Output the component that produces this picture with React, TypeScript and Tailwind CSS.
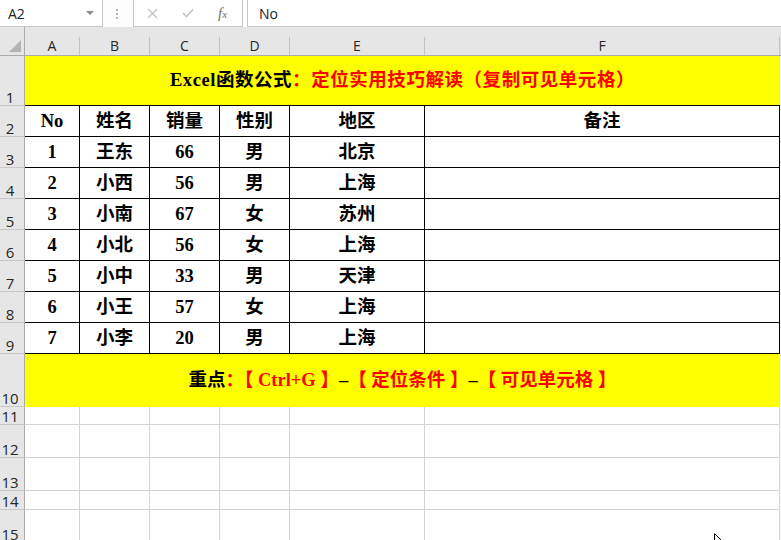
import React from 'react';

const cols = [
  { key: 'A', w: 'w-[55px]' },
  { key: 'B', w: 'w-[70px]' },
  { key: 'C', w: 'w-[70px]' },
  { key: 'D', w: 'w-[70px]' },
  { key: 'E', w: 'w-[135px]' },
  { key: 'F', w: 'w-[355px]' },
];

const header = ['No', '姓名', '销量', '性别', '地区', '备注'];

const rows = [
  ['1', '王东', '66', '男', '北京', ''],
  ['2', '小西', '56', '男', '上海', ''],
  ['3', '小南', '67', '女', '苏州', ''],
  ['4', '小北', '56', '女', '上海', ''],
  ['5', '小中', '33', '男', '天津', ''],
  ['6', '小王', '57', '女', '上海', ''],
  ['7', '小李', '20', '男', '上海', ''],
];

const emptyRows = [
  { n: 11, h: 'h-[18px]' },
  { n: 12, h: 'h-[33px]' },
  { n: 13, h: 'h-[33px]' },
  { n: 14, h: 'h-[19px]' },
  { n: 15, h: 'h-[33px]' },
];

const cellFont = "font-['Liberation_Serif','Noto_Sans_CJK_SC',serif] font-bold text-[18.5px] text-black";

function RowHead({ n }: { n: number }) {
  return (
    <div className="w-[25px] shrink-0 h-full flex items-end justify-center pr-[4px] bg-[#e6e6e6] border-r border-b border-r-[#ababab] border-b-[#c8c8c8] font-['Open_Sans',sans-serif] text-[15px] leading-none text-[#262626]">
      {n}
    </div>
  );
}

function FormulaBar() {
  return (
    <div className="flex h-[27px] shrink-0 bg-[#fdfdfd] font-['Open_Sans',sans-serif] text-[14px] text-[#222]">
      <div className="w-[103px] h-full flex items-center justify-between pl-[8px] pr-[8px] bg-white border-r border-b border-[#c6c6c6]">
        <span>A2</span>
        <svg width="8" height="5" viewBox="0 0 8 5">
          <path d="M0 0 L8 0 L4 4 Z" fill="#8a8a8a" />
        </svg>
      </div>
      <div className="w-[30px] h-full flex flex-col items-center justify-center gap-[2px] pr-[2px]">
        <span className="w-[2px] h-[2px] bg-[#b5b5b5]" />
        <span className="w-[2px] h-[2px] bg-[#b5b5b5]" />
        <span className="w-[2px] h-[2px] bg-[#b5b5b5]" />
      </div>
      <div className="w-[110px] h-full flex items-center bg-white border-l border-r border-b border-[#c6c6c6]">
        <svg className="ml-[13px]" width="11" height="11" viewBox="0 0 11 11">
          <path d="M1 1 L10 10 M10 1 L1 10" stroke="#c3c3c3" strokeWidth="1.4" />
        </svg>
        <svg className="ml-[24px]" width="12" height="10" viewBox="0 0 12 10">
          <path d="M1 5 L4.5 8.5 L11 1.5" stroke="#c3c3c3" strokeWidth="1.6" fill="none" />
        </svg>
        <span className="ml-[24px] font-['Liberation_Serif',serif] italic text-[15px] text-[#6e6e6e] leading-none">
          f<span className="text-[11px]">x</span>
        </span>
      </div>
      <div className="w-[4px] h-full" />
      <div className="flex-1 h-full flex items-center pl-[11px] bg-white border-l border-b border-[#c6c6c6]">
        No
      </div>
    </div>
  );
}

function ColumnHeader() {
  return (
    <div className="flex h-[29px] shrink-0 bg-[#e6e6e6] border-b border-[#ababab] font-['Open_Sans',sans-serif] text-[14px] text-[#262626]">
      <div className="w-[25px] shrink-0 h-full flex items-end justify-end pr-[3px] pb-[3px] border-r border-[#ababab]">
        <svg width="12" height="12" viewBox="0 0 12 12">
          <path d="M12 0 L12 12 L0 12 Z" fill="#b4b4b4" />
        </svg>
      </div>
      {cols.map(c => (
        <div key={c.key} className={`${c.w} shrink-0 h-full flex items-end`}>
          <div className="flex-1 text-center leading-none pb-[2px]">{c.key}</div>
          <div className="w-px h-[18px] bg-[#c2c2c2]" />
        </div>
      ))}
    </div>
  );
}

export default function App() {
  return (
    <div className="relative w-[781px] h-[540px] overflow-hidden bg-white flex flex-col">
      <FormulaBar />
      <ColumnHeader />

      {/* row 1: merged title */}
      <div className="flex h-[50px] shrink-0">
        <RowHead n={1} />
        <div className={`w-[755px] h-full flex items-center justify-center bg-[#ffff00] border-b border-black tracking-[0.55px] [text-spacing-trim:space-all] ${cellFont}`}>
          <span>Excel函数公式</span>
          <span className="text-[#ff0000]">：定位实用技巧解读（复制可见单元格）</span>
        </div>
      </div>

      {/* row 2: header */}
      <div className="flex h-[31px] shrink-0">
        <RowHead n={2} />
        {cols.map((c, i) => (
          <div key={c.key} className={`${c.w} shrink-0 h-full flex items-center justify-center pt-[2px] border-r border-b border-black ${cellFont}`}>
            {header[i]}
          </div>
        ))}
      </div>

      {rows.map((r, ri) => (
        <div key={ri} className="flex h-[31px] shrink-0">
          <RowHead n={ri + 3} />
          {cols.map((c, i) => (
            <div key={c.key} className={`${c.w} shrink-0 h-full flex items-center justify-center pt-[2px] border-r border-b border-black ${cellFont}`}>
              {r[i]}
            </div>
          ))}
        </div>
      ))}

      {/* row 10: merged note */}
      <div className="flex h-[53px] shrink-0">
        <RowHead n={10} />
        <div className={`w-[755px] h-full flex items-center justify-center bg-[#ffff00] whitespace-pre ${cellFont}`}>
          <span>重点</span>
          <span className="text-[#ff0000]">：【 Ctrl+G 】</span>
          <span>–</span>
          <span className="text-[#ff0000]">【 定位条件 】</span>
          <span>–</span>
          <span className="text-[#ff0000]">【 可见单元格 】</span>
        </div>
      </div>

      {emptyRows.map(r => (
        <div key={r.n} className={`flex ${r.h} shrink-0`}>
          <RowHead n={r.n} />
          {cols.map(c => (
            <div key={c.key} className={`${c.w} shrink-0 h-full border-r border-b border-[#d4d4d4]`} />
          ))}
        </div>
      ))}

      {/* mouse pointer */}
      <svg className="absolute left-[714px] top-[533px]" width="10" height="14" viewBox="0 0 10 14">
        <path d="M0.5 0.5 L0.5 11 L3 8.5 L5 13 L6.5 12.3 L4.6 8 L8 8 Z" fill="#fff" stroke="#000" strokeWidth="1" />
      </svg>
    </div>
  );
}
